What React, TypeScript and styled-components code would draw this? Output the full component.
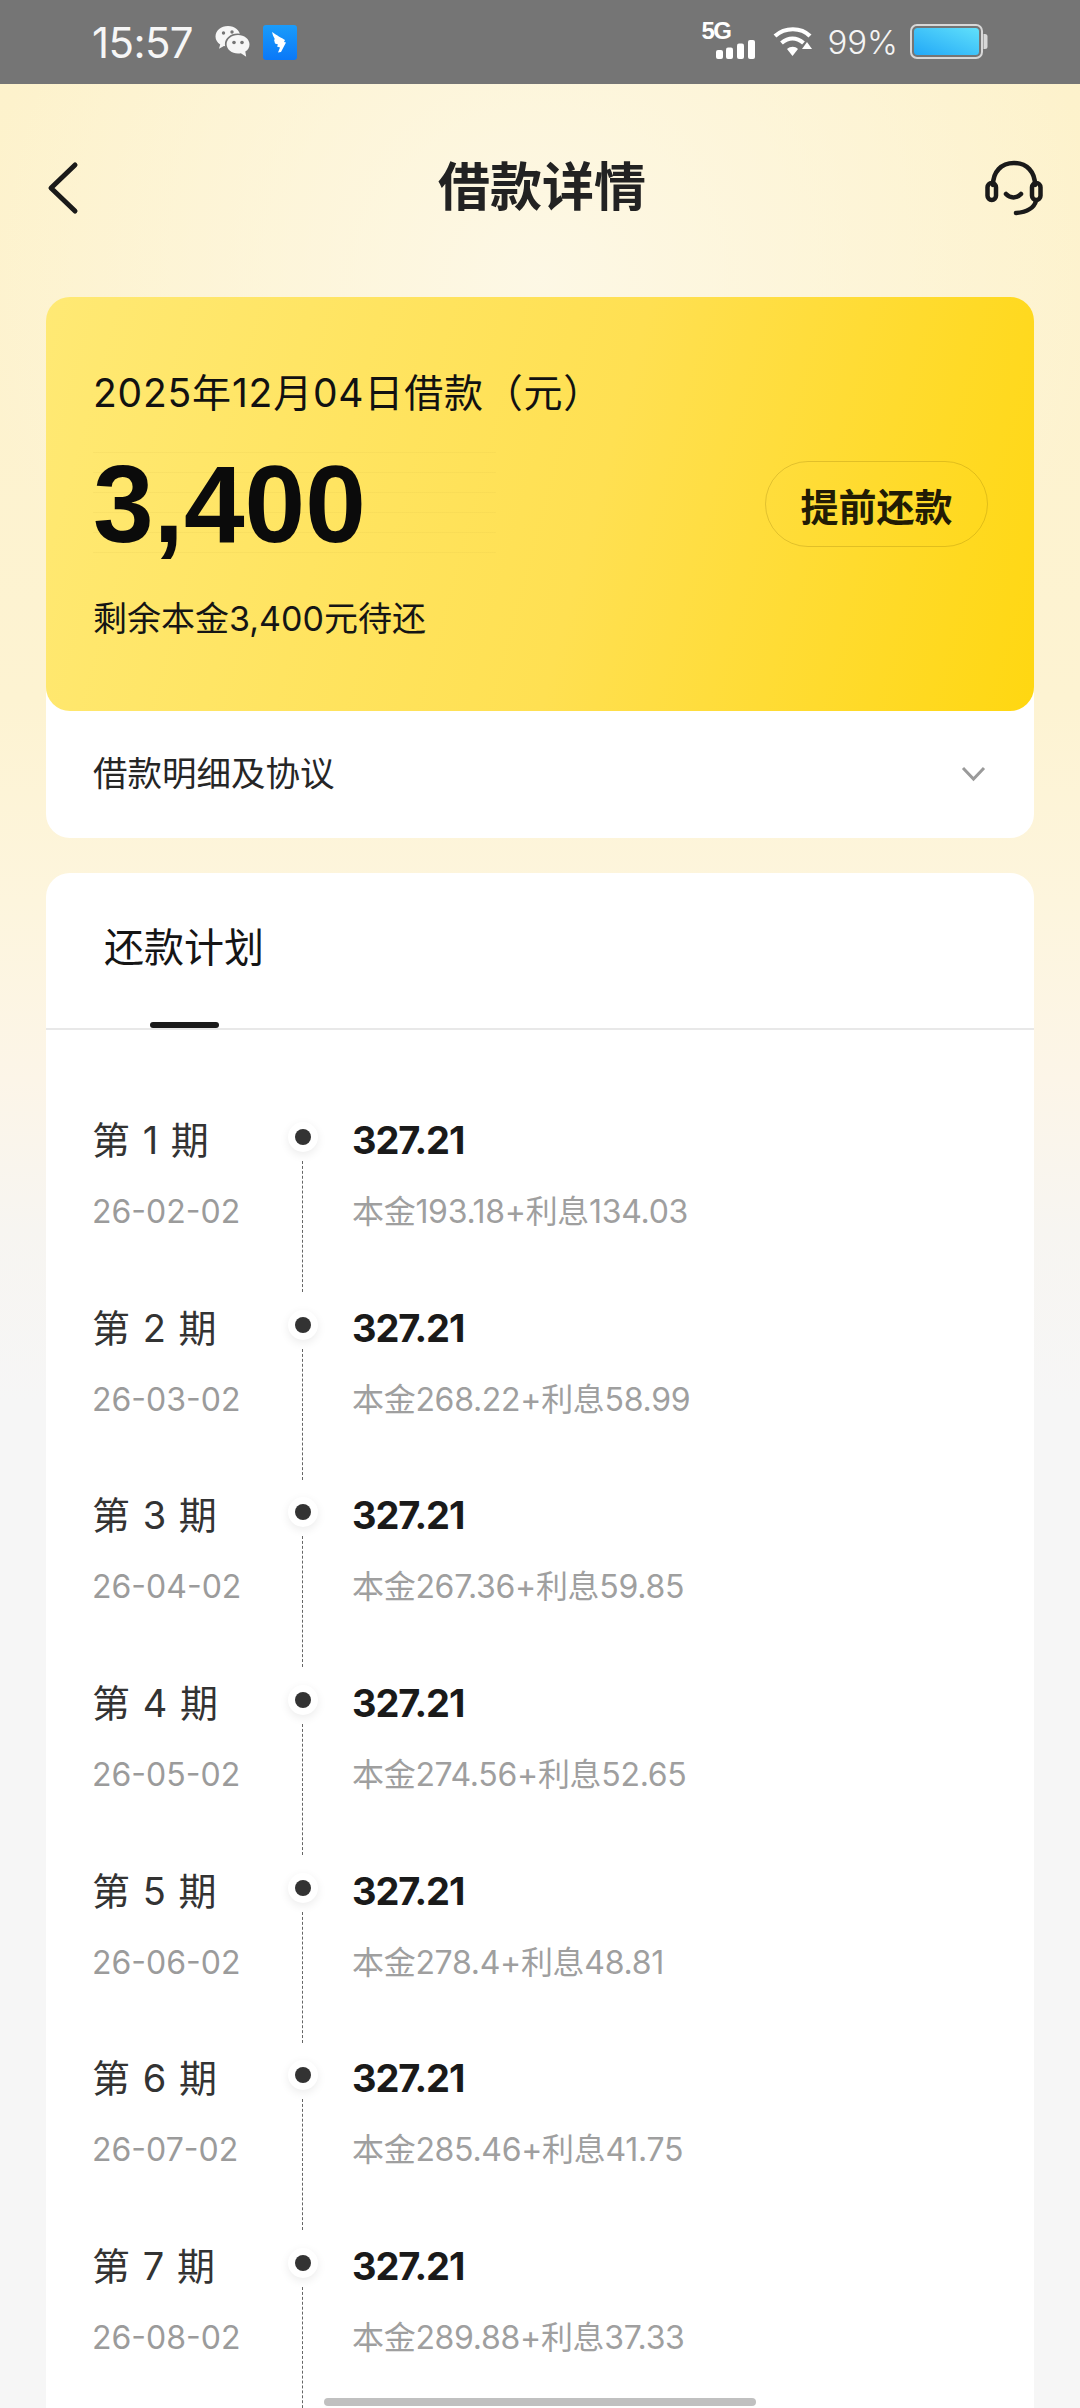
import React from "react";
import styled, { createGlobalStyle } from "styled-components";

const CJK = `Inter, "Noto Sans CJK SC", sans-serif`;

const Global = createGlobalStyle`
  html, body { margin: 0; padding: 0; }
  body { font-family: ${CJK}; background: #f6f6f6; }
  * { box-sizing: border-box; }
`;

const Page = styled.div`
  position: relative;
  width: 1080px;
  height: 2408px;
  overflow: hidden;
  background:
    radial-gradient(ellipse 560px 560px at 540px 280px, rgba(253,248,230,.95), rgba(253,248,230,0)),
    linear-gradient(180deg, #fdf2cb 0, #fdf3d2 700px, #fdf5dd 900px, #fcf5e8 1080px, #f7f5f1 1230px, #f6f6f6 1400px);
`;

const StatusBar = styled.div`
  height: 84px;
  background: #757575;
  display: flex;
  align-items: center;
  justify-content: space-between;
  padding: 0 92px 0 92px;
  color: #fff;
`;
const StatusGroup = styled.div`
  display: flex;
  align-items: center;
`;
const Clock = styled.span`
  font-size: 42px;
  font-weight: 400;
  letter-spacing: -0.6px;
  margin-right: 22px;
  color: #f6f6f6;
`;
const Percent = styled.span`
  font-size: 33px;
  font-weight: 300;
  margin: 0 12px 0 14px;
  color: #f4f4f4;
`;
const FiveG = styled.div`
  position: relative;
  width: 54px;
  height: 36px;
  margin-right: 18px;
`;
const FiveGLabel = styled.span`
  position: absolute;
  left: 0;
  top: -5px;
  font: 700 24px/24px "Liberation Sans Narrow", "Liberation Sans", sans-serif;
  letter-spacing: -1.5px;
`;

const Nav = styled.div`
  height: 213px;
  display: flex;
  align-items: center;
  justify-content: space-between;
  padding: 0 36px 6px 46px;
`;
const Title = styled.h1`
  margin: 0 0 0 14px;
  font-size: 52px;
  line-height: 70px;
  font-weight: 700;
  color: #222;
`;

const Stack = styled.div`
  margin: 0 46px;
`;
const Hero = styled.div`
  position: relative;
  height: 414px;
  border-radius: 24px;
  background: linear-gradient(105deg, #ffe974 0%, #ffe052 55%, #ffd711 100%);
  padding: 70px 46px 0 47px;
  z-index: 1;
`;
const HeroDate = styled.div`
  font-size: 39px;
  line-height: 52px;
  letter-spacing: 0.8px;
  color: #111;
`;
const HeroMiddle = styled.div`
  position: relative;
  margin-top: 30px;
  height: 110px;
  display: flex;
  align-items: center;
  justify-content: space-between;
`;
const Lines = styled.div`
  position: absolute;
  left: 0;
  top: 3px;
  width: 403px;
  height: 101px;
  background: repeating-linear-gradient(180deg, rgba(200,170,60,.1) 0, rgba(200,170,60,.1) 1px, transparent 1px, transparent 20px);
`;
const Amount = styled.div`
  position: relative;
  font: 700 109px/110px "Liberation Sans", sans-serif;
  color: #0b0b0b;
`;
const Prepay = styled.div`
  width: 223px;
  height: 86px;
  border: 1px solid rgba(120, 90, 0, .22);
  border-radius: 43px;
  display: flex;
  align-items: center;
  justify-content: center;
  font-size: 38px;
  font-weight: 700;
  color: #221c05;
`;
const HeroNote = styled.div`
  margin-top: 35px;
  font-size: 34px;
  line-height: 50px;
  color: #151515;
`;
const Detail = styled.div`
  height: 147px;
  margin-top: -20px;
  padding: 13px 46px 0 47px;
  background: #fff;
  border-radius: 0 0 24px 24px;
  display: flex;
  align-items: center;
  justify-content: space-between;
  font-size: 34.500px;
  color: #262626;
`;
const ChevronSvg = styled.svg`
  margin-top: 5px;
`;
const Schedule = styled.div`
  margin: 35px 46px 0;
  background: #fff;
  border-radius: 24px 24px 0 0;
  height: 1600px;
`;
const Tabs = styled.div`
  position: relative;
  height: 157px;
  border-bottom: 2px solid #e8e8e8;
  padding: 45px 0 0 58px;
`;
const TabLabel = styled.div`
  font-size: 40px;
  line-height: 60px;
  color: #151515;
`;
const TabMark = styled.div`
  position: absolute;
  left: 104px;
  bottom: 0;
  width: 69px;
  height: 6px;
  border-radius: 3px;
  background: #1a1a1a;
`;
const List = styled.div`
  padding-top: 84px;
`;
const Row = styled.div`
  display: grid;
  grid-template-columns: 203px 15px 1fr;
  grid-template-rows: 52px 1fr;
  height: 187.7px;
  padding-left: 46px;
`;
const Period = styled.div`
  grid-column: 1;
  font-size: 38px;
  line-height: 52px;
  color: #333;
  word-spacing: 2px;
`;
const DateText = styled.div`
  grid-column: 1;
  grid-row: 2;
  margin-top: 26px;
  font-size: 32px;
  line-height: 40px;
  color: #9b9b9b;
`;
const Axis = styled.div`
  grid-column: 2;
  grid-row: 1 / 3;
  position: relative;
  height: 187.7px;
`;
const Dot = styled.div`
  position: absolute;
  left: -7px;
  top: 8px;
  width: 30px;
  height: 30px;
  border-radius: 50%;
  background: #fff;
  box-shadow: 0 3px 10px rgba(0,0,0,.08);
  &::after {
    content: "";
    position: absolute;
    left: 7px;
    top: 7px;
    width: 16px;
    height: 16px;
    border-radius: 50%;
    background: #333;
  }
`;
const Dash = styled.div`
  position: absolute;
  left: 7px;
  top: 47px;
  height: 131px;
  border-left: 1px dashed #666;
`;
const Amt = styled.div`
  grid-column: 3;
  padding-left: 42px;
  font-size: 38px;
  font-weight: 700;
  line-height: 52px;
  letter-spacing: -1.1px;
  color: #1a1a1a;
`;
const Breakdown = styled.div`
  grid-column: 3;
  grid-row: 2;
  padding-left: 42px;
  margin-top: 26px;
  font-size: 32px;
  line-height: 40px;
  letter-spacing: -0.3px;
  color: #9f9f9f;
`;
const ScrollThumb = styled.div`
  position: absolute;
  left: 324px;
  bottom: 2px;
  width: 432px;
  height: 8px;
  border-radius: 4px;
  background: #c0c0c0;
`;

const rows = [
  ["第 1 期", "26-02-02", "本金193.18+利息134.03"],
  ["第 2 期", "26-03-02", "本金268.22+利息58.99"],
  ["第 3 期", "26-04-02", "本金267.36+利息59.85"],
  ["第 4 期", "26-05-02", "本金274.56+利息52.65"],
  ["第 5 期", "26-06-02", "本金278.4+利息48.81"],
  ["第 6 期", "26-07-02", "本金285.46+利息41.75"],
  ["第 7 期", "26-08-02", "本金289.88+利息37.33"],
];

const WeChat = () => (
  <svg width="36" height="34" viewBox="0 0 36 34" style={{ marginRight: 12 }}>
    <path fill="#f6f6f6" d="M13 1C6 1 .5 5.6.5 11.4c0 3.3 1.9 6.2 4.7 8.1l-1.2 4.2 4.9-2.6c1.2.3 2.5.5 3.9.5 6.8 0 12.4-4.6 12.4-10.2C25.2 5.6 19.8 1 13 1z" />
    <path fill="#757575" d="M22.5 8.6c-7 0-12.6 4.8-12.6 10.6s5.6 10.6 12.6 10.6c1 0 2-.1 3-.3l5 3.2 1-5c2.7-1.9 3.9-5.2 3.9-8.5 0-5.8-5.900-10.600-12.900-10.600z" />
    <path fill="#f6f6f6" d="M23 10c-6.300 0-11.400 4.200-11.400 9.300S16.700 28.600 23 28.600c1 0 2-.1 2.900-.4l5.300 3.600-.9-5.200c2.800-1.700 4.200-4.200 4.200-7.300C34.500 14.200 29.300 10 23 10z" />
    <circle cx="8.500" cy="8" r="1.700" fill="#757575" />
    <circle cx="17" cy="7" r="1.700" fill="#757575" />
    <circle cx="19" cy="17.500" r="1.800" fill="#757575" />
    <circle cx="27" cy="17.500" r="1.800" fill="#757575" />
  </svg>
);

const Ding = () => (
  <svg width="34" height="35" viewBox="0 0 34 35">
    <defs>
      <linearGradient id="dg" x1="0" y1="0" x2="0" y2="1">
        <stop offset="0" stopColor="#1a9cfa" />
        <stop offset="1" stopColor="#0a78f8" />
      </linearGradient>
    </defs>
    <rect width="34" height="35" rx="3" fill="url(#dg)" />
    <path fill="#fff" d="M9 7c4 3 10 6 13 8l-1 2 2 .5-5 9.500-3 .5 2-5-3-1 1-2-3-1-1-4 1 0-2-4z" />
  </svg>
);

const Signal = () => (
  <svg width="54" height="20" viewBox="0 0 54 20" style={{ position: "absolute", left: 0, top: 16 }}>
    <rect x="15" y="10" width="7" height="9" rx="2" fill="#fff" />
    <rect x="25" y="7.500" width="7" height="11.500" rx="2" fill="#fff" />
    <rect x="36" y="3.500" width="7" height="15.500" rx="2" fill="#fff" />
    <rect x="47" y="0" width="7" height="19" rx="2" fill="#fff" />
  </svg>
);

const Wifi = () => (
  <svg width="40" height="34" viewBox="0 0 40 34">
    <g fill="none" stroke="#fff" strokeWidth="4.200">
      <path d="M2 11c10-9 26-9 35 0" />
      <path d="M8.500 18c7-6 15-6 22 0" />
    </g>
    <path fill="#fff" d="M14 24c3.500-3 8-3 11 0l-5.500 7z" />
    <path fill="#fff" d="M34 17l5 7h-10z" />
  </svg>
);

const Battery = () => (
  <svg width="78" height="36" viewBox="0 0 78 36">
    <defs>
      <linearGradient id="bt" x1="0" y1="1" x2="1" y2="0">
        <stop offset="0" stopColor="#22a8f7" />
        <stop offset="1" stopColor="#60e0fb" />
      </linearGradient>
    </defs>
    <rect x="1" y="1" width="71" height="33" rx="6" fill="none" stroke="#d8d8d8" strokeWidth="2" />
    <rect x="4" y="4" width="65" height="27" rx="3.500" fill="url(#bt)" />
    <path d="M73.500 10h1.500a2.500 2.500 0 0 1 2.500 2.500v10a2.500 2.500 0 0 1-2.500 2.500h-1.500z" fill="#d8d8d8" />
  </svg>
);

const Back = () => (
  <svg width="40" height="56" viewBox="0 0 40 56">
    <path d="M29 5 L5 28 L29 51" fill="none" stroke="#1a1a1a" strokeWidth="5" strokeLinecap="round" strokeLinejoin="round" />
  </svg>
);

const Headset = () => (
  <svg width="60" height="56" viewBox="0 0 60 56">
    <g fill="none" stroke="#1a1a1a" strokeWidth="4.500" strokeLinecap="round">
      <path d="M9 25C9 12 17 3 30 3s21 9 21 22" />
      <rect x="3.500" y="23" width="8.500" height="17" rx="4.200" />
      <rect x="48" y="23" width="8.500" height="17" rx="4.200" />
      <path d="M22 34c4 4.500 11 4.500 15 0" />
      <path d="M52 41c-2 7-9 11-20 12" />
    </g>
  </svg>
);

const Chevron = () => (
  <ChevronSvg width="28" height="18" viewBox="0 0 28 18">
    <path d="M3 3 L13.500 14 L24 3" fill="none" stroke="#9a9a9a" strokeWidth="3" />
  </ChevronSvg>
);

export default function App() {
  return (
    <Page>
      <Global />
      <StatusBar>
        <StatusGroup>
          <Clock>15:57</Clock>
          <WeChat />
          <Ding />
        </StatusGroup>
        <StatusGroup>
          <FiveG>
            <FiveGLabel>5G</FiveGLabel>
            <Signal />
          </FiveG>
          <Wifi />
          <Percent>99%</Percent>
          <Battery />
        </StatusGroup>
      </StatusBar>
      <Nav>
        <Back />
        <Title>借款详情</Title>
        <Headset />
      </Nav>
      <Stack>
        <Hero>
          <HeroDate>2025年12月04日借款（元）</HeroDate>
          <HeroMiddle>
            <Lines />
            <Amount>3,400</Amount>
            <Prepay>提前还款</Prepay>
          </HeroMiddle>
          <HeroNote>剩余本金3,400元待还</HeroNote>
        </Hero>
        <Detail>
          <span>借款明细及协议</span>
          <Chevron />
        </Detail>
      </Stack>
      <Schedule>
        <Tabs>
          <TabLabel>还款计划</TabLabel>
          <TabMark />
        </Tabs>
        <List>
          {rows.map(([p, d, b]) => (
            <Row key={p}>
              <Period>{p}</Period>
              <DateText>{d}</DateText>
              <Axis>
                <Dot />
                <Dash />
              </Axis>
              <Amt>327.21</Amt>
              <Breakdown>{b}</Breakdown>
            </Row>
          ))}
        </List>
      </Schedule>
      <ScrollThumb />
    </Page>
  );
}
